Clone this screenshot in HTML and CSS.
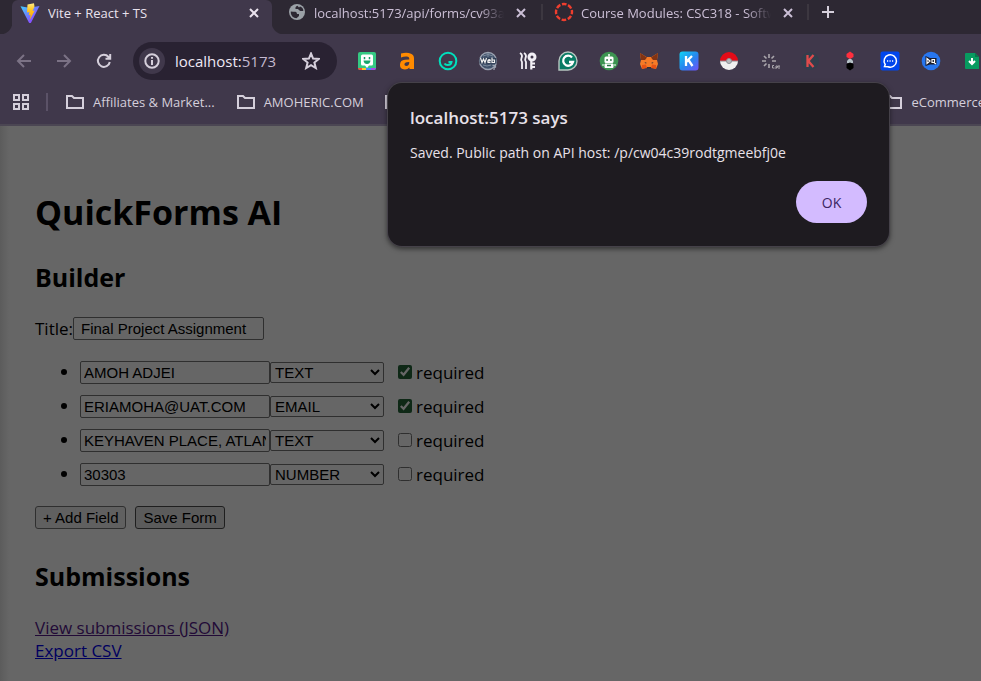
FILE: index.html
```html
<!DOCTYPE html>
<html lang="en">
<head>
<meta charset="utf-8">
<title>Vite + React + TS</title>
<link rel="stylesheet" href="styles.css">
</head>
<body>
<header class="browser">
  <div class="tabs">
    <div class="tab tab-active">
      <svg class="favicon" viewBox="0 0 20 20" aria-hidden="true"><defs><linearGradient id="vite" x1="0" y1="0" x2="1" y2="1"><stop offset="0" stop-color="#41d1ff"/><stop offset="1" stop-color="#a020ff"/></linearGradient><linearGradient id="bolt" x1="0" y1="0" x2="0" y2="1"><stop offset="0" stop-color="#ffea83"/><stop offset=".4" stop-color="#ffc420"/><stop offset="1" stop-color="#ffa000"/></linearGradient></defs><path d="M.5 3.200L9 4.700L19.500 3L11 19.800Q10 21 9 19.800Z" fill="url(#vite)"/><path d="M14 .3L7.500 1.500L7 9.500L9.400 8.900L8.700 12.300L10.600 11.700L9.700 17L14.800 7.600L12.600 8L14.500 3.500Z" fill="url(#bolt)"/></svg>
      <span class="tab-title">Vite + React + TS</span>
      <button class="close" aria-label="Close tab"><svg viewBox="0 0 10 10"><path d="M1 1L9 9M9 1L1 9"/></svg></button>
    </div>
    <div class="tab tab-api">
      <svg class="favicon" viewBox="0 0 20 20" aria-hidden="true"><circle cx="10" cy="10" r="8" fill="#9ba1a7"/><path d="M3.800 9.500Q6 9.800 8.500 9.800Q10 10 10 12H12V14L9.500 16.300Q4.500 16 3.800 11ZM10.500 3.800Q8 4.500 8.500 7H11Q12 8.500 13.500 9H16.300Q16.500 5.500 13 4.500L12 5.500Z" fill="#2d2833"/></svg>
      <span class="tab-title">localhost:5173/api/forms/cv93a</span>
      <button class="close" aria-label="Close tab"><svg viewBox="0 0 10 10"><path d="M1 1L9 9M9 1L1 9"/></svg></button>
    </div>
    <div class="tab tab-course">
      <svg class="favicon" viewBox="0 0 20 20" aria-hidden="true"><circle cx="10" cy="10" r="8" fill="none" stroke="#ef3e2e" stroke-width="2.400" stroke-dasharray="4.600 1.683" stroke-dashoffset="2.300"/></svg>
      <span class="tab-title">Course Modules: CSC318 - Softw</span>
      <button class="close" aria-label="Close tab"><svg viewBox="0 0 10 10"><path d="M1 1L9 9M9 1L1 9"/></svg></button>
    </div>
    <button class="new-tab" aria-label="New tab"><svg viewBox="0 0 12 12"><path d="M6 0V12M0 6H12"/></svg></button>
  </div>
  <div class="toolbar">
    <nav class="history">
      <button class="dim" aria-label="Back"><svg viewBox="0 0 16 16"><path d="M15 8H2M8 2L2 8L8 14"/></svg></button>
      <button class="dim" aria-label="Forward"><svg viewBox="0 0 16 16"><path d="M1 8H14M8 2L14 8L8 14"/></svg></button>
      <button aria-label="Reload"><svg viewBox="0 0 16 16"><path d="M13.800 9A6 6 0 1 1 12.500 4L14 5.500M14.200 1V5.800H9.500"/></svg></button>
    </nav>
    <div class="address">
      <button class="site-info" aria-label="Site information"><svg viewBox="0 0 16 16"><circle cx="8" cy="8" r="6.700"/><path d="M8 7V12M8 4V5.700"/></svg></button>
      <span class="url">localhost:<span class="port">5173</span></span>
      <button class="star" aria-label="Bookmark"><svg viewBox="0 0 18 18"><path d="M9 1.500L11.100 6.600L16.700 7L12.400 10.600L13.800 16L9 13.100L4.200 16L5.600 10.600L1.300 7L6.900 6.600Z"/></svg></button>
    </div>
    <div class="extensions">
      <svg viewBox="0 0 20 20"><defs><clipPath id="rb"><rect x="1" y="1" width="18" height="18" rx="2"/></clipPath></defs><g clip-path="url(#rb)"><path fill="#35c983" d="M0 0H20V20H0Z"/><path fill="#fb4b3d" d="M0 17H5V20H0Z"/><path fill="#ffc928" d="M5 17H9V20H5Z"/><path fill="#438bff" d="M9 17H14V20H9Z"/><path fill="#a849e6" d="M14 17H20V20H14Z"/></g><path d="M5.500 3.500H14.500Q16 3.500 16 5V13Q16 14.500 14.500 14.500H12L10 17L8 14.500H5.500Q4 14.500 4 13V5Q4 3.500 5.500 3.500Z" fill="#fff"/><path d="M7.500 6V8.300M12.500 6V8.300" stroke="#169b67" stroke-width="1.500"/><path d="M6.500 9.500H13.500Q13 13 10 13Q7 13 6.500 9.500Z" fill="#16a66b"/></svg>
      <svg viewBox="0 0 20 20"><path d="M4 5V2.500Q10 .7 14 2.800Q17 4 17 7.500V18H12.500V16.500Q10 19 6.500 18.300Q2.700 17.500 3 13.500Q3.300 9 8 8.700L12.300 8.500Q12.500 5.700 9.800 5.500Q7 5.300 4 6.500ZM12.300 11L9.500 11.200Q7.500 11.500 7.400 13.300Q7.400 15 9.200 15Q12.300 15 12.300 11Z" fill="#ff8b00" fill-rule="evenodd"/></svg>
      <svg viewBox="0 0 20 20" fill="none" stroke="#00e0bd" stroke-width="2"><circle cx="10" cy="10" r="8.300"/><path d="M10.500 11H13.500Q13 14 9.500 14Q7.500 14 6.500 12.500"/></svg>
      <svg viewBox="0 0 20 20"><circle cx="10" cy="10" r="8.500" fill="#40516a" stroke="#9ba2b1" stroke-width="1.300"/><path d="M5 5Q10 2 15 5M5 14Q9 16 13 14M10 2V6" fill="none" stroke="#7d8b9d"/><path d="M1.500 7H18.500V12.500H1.500Z" fill="#2f3d53"/><path d="M2.500 7L4 11.500L5.500 8L7 11.500L8.500 7M12.500 11.500H10Q9.500 9 11 8.700Q13 9 12 10H10M14 6.500V11.500H16.500V9H14" fill="none" stroke="#f2f2f2" stroke-width="1.200"/><path d="M14.500 14.500Q18 14 17.500 16Q16 16 16 18V19" fill="none" stroke="#9ba2b1" stroke-width="1.300"/></svg>
      <svg viewBox="0 0 20 20" fill="none" stroke="#f2eff5" stroke-width="1.800"><path d="M2 2Q5 4 3.500 7Q2.500 9 4 11V18M6 2Q9 4 7.500 7Q6.500 9 8 11V18"/><circle cx="14" cy="6" r="3" stroke-width="3"/><path d="M13.300 9V18.500M14 12.500H17M14 16H17" stroke-width="2.200"/></svg>
      <svg viewBox="0 0 20 20"><path d="M1 19V10A9 9 0 1 1 10 19Z" fill="#087b64" stroke="#b7c6c1" stroke-width="1.400"/><path d="M14 6.500A5 5 0 1 0 15 11H11" fill="none" stroke="#fff" stroke-width="2.300"/></svg>
      <svg viewBox="0 0 20 20"><circle cx="10" cy="10" r="9.300" fill="#3d9451"/><path d="M10 3V5.500" stroke="#fff" stroke-width="1.500"/><rect x="5.500" y="5.500" width="9" height="6.500" rx="1.500" fill="#fff"/><path d="M6 13H14V16.500H6ZM4 13V15M16 13V15" fill="#fff" stroke="#fff"/><path d="M7.200 9H9M11 9H12.800M8 14.500H12" stroke="#287343" stroke-width="1.700"/></svg>
      <svg viewBox="0 0 20 20"><path d="M1 2L7.500 6H12.500L19 2L18 9L19 13L17 18L12.500 16.500H7.500L3 18L1 13L2 9Z" fill="#f57b27"/><path d="M1 2L8 6.500L6 9L2 9ZM19 2L12 6.500L14 9L18 9Z" fill="#813313"/><path d="M5.500 11L8 12L6.500 12.500ZM14.500 11L12 12L13.500 12.500ZM8 16H12V17.500H8Z" fill="#30303a"/><path d="M3 14L7 13.500L8 17L3 18ZM17 14L13 13.500L12 17L17 18Z" fill="#e65315"/></svg>
      <svg viewBox="0 0 20 20"><defs><linearGradient id="kk" x1=".1" y1="0" x2="1" y2="1"><stop stop-color="#12cdf5"/><stop offset=".5" stop-color="#2687ee"/><stop offset="1" stop-color="#7150fa"/></linearGradient></defs><rect x=".5" y=".5" width="19" height="19" rx="3" fill="url(#kk)"/><path d="M7 5V15M13 5L7 11L9.500 9L13.500 15" stroke="#fff" stroke-width="2.300" fill="none"/></svg>
      <svg viewBox="0 0 20 20"><path d="M1 10A9 9 0 0 1 19 10Z" fill="#e30b18"/><path d="M1 10A9 9 0 0 0 19 10Z" fill="#f0f0f0"/><path d="M1 10H19" stroke="#8a868c" stroke-width="1"/><circle cx="10" cy="10" r="2.500" fill="#b8bcc0" stroke="#8a9095"/></svg>
      <svg viewBox="0 0 20 20" fill="none" stroke="#aaa6ac" stroke-width="1.600"><path d="M9 3V7M4 5L6.500 7.500M14 5L11.500 7.500M2 10H6M4 15L6.500 12.500M9 13V17M12 10H16"/><path d="M14 14.500H12.500V17H14.500M16 18V15H17.500V16.500H16M18 15H20M19 15V18" stroke-width="1"/></svg>
      <svg viewBox="0 0 20 20"><circle cx="10" cy="10" r="9" fill="#323e4c"/><path d="M7.500 4V16M13.500 4L8.300 10L13.500 16" fill="none" stroke="#df4b4c" stroke-width="2.300"/></svg>
      <svg viewBox="0 0 20 20"><path d="M7 12V10Q10 5 13 10V12Z" fill="#b5c1c7"/><path d="M10 .5L13.500 3V6L10 8L6.500 6V3Z" fill="#ff2e3d"/><path d="M10 11.500L13.500 13V17L10 19.500L6.500 17V13Z" fill="#000"/></svg>
      <svg viewBox="0 0 20 20"><rect x=".5" y=".5" width="19" height="19" rx="2" fill="#0046ed"/><path d="M4.500 15.500L5.200 13.500A6.200 6.200 0 1 1 8 15.700Z" fill="none" stroke="#fff" stroke-width="1.500"/><path d="M7 10H8.200M9.500 10H10.700M12 10H13.200" stroke="#fff" stroke-width="1.500"/></svg>
      <svg viewBox="0 0 20 20"><circle cx="10" cy="10" r="9.300" fill="#2776ef"/><path d="M4.500 5L9 7H15.500V13.500H9L4.500 15Z" fill="#1b1b28"/><path d="M6 7.500V12.500L9 10ZM11 8.500H13.500V11.500H11ZM13 11.500L15 13" fill="none" stroke="#fff" stroke-width="1.200"/></svg>
      <svg viewBox="0 0 20 20"><path d="M5 2H14L18 6V18H5Q4 18 4 17V3Q4 2 5 2Z" fill="#079b60"/><path d="M14 2V6H18Z" fill="#09754b"/><path d="M11 7V13M8 10L11 13L14 10" fill="none" stroke="#fff" stroke-width="2"/></svg>
    </div>
  </div>
  <nav class="bookmarks">
    <button class="apps" aria-label="Apps"><svg viewBox="0 0 18 18"><path d="M2 2H7V7H2ZM11 2H16V7H11ZM2 11H7V16H2ZM11 11H16V16H11Z"/></svg></button>
    <span class="divider"></span>
    <a class="bookmark" href="#"><svg viewBox="0 0 20 16"><path d="M2 2H7L9 4H18V14H2Z"/></svg>Affiliates &amp; Market...</a>
    <a class="bookmark" href="#"><svg viewBox="0 0 20 16"><path d="M2 2H7L9 4H18V14H2Z"/></svg>AMOHERIC.COM</a>
    <a class="bookmark" href="#" aria-label="Bookmark"><svg viewBox="0 0 20 16"><path d="M1 2H15V14H1Z"/></svg></a>
    <a class="bookmark bookmark-last" href="#"><svg viewBox="0 0 20 16"><path d="M2 2H7L9 4H18V14H2Z"/></svg>eCommerce</a>
  </nav>
</header>
<main class="page">
  <h1>QuickForms AI</h1>
  <h2>Builder</h2>
  <div class="title-row"><label for="form-title">Title:</label><input class="field title-field" id="form-title" type="text" value="Final Project Assignment"></div>
  <ul class="fields">
    <li><div class="row"><input class="field" type="text" aria-label="Field label" value="AMOH ADJEI"><select aria-label="Field type"><option>TEXT</option></select><label class="required"><input type="checkbox" checked>required</label></div></li>
    <li><div class="row"><input class="field" type="text" aria-label="Field label" value="ERIAMOHA@UAT.COM"><select aria-label="Field type"><option>EMAIL</option></select><label class="required"><input type="checkbox" checked>required</label></div></li>
    <li><div class="row"><input class="field" type="text" aria-label="Field label" value="KEYHAVEN PLACE, ATLANTA"><select aria-label="Field type"><option>TEXT</option></select><label class="required"><input type="checkbox">required</label></div></li>
    <li><div class="row"><input class="field" type="text" aria-label="Field label" value="30303"><select aria-label="Field type"><option>NUMBER</option></select><label class="required"><input type="checkbox">required</label></div></li>
  </ul>
  <div class="actions"><button>+ Add Field</button><button class="save">Save Form</button></div>
  <h2>Submissions</h2>
  <div class="links"><a class="visited" href="#">View submissions (JSON)</a><a href="#">Export CSV</a></div>
</main>
<section class="dialog" role="alertdialog" aria-labelledby="dialog-title">
  <h3 id="dialog-title">localhost:5173 says</h3>
  <p>Saved. Public path on API host: /p/cw04c39rodtgmeebfj0e</p>
  <button>OK</button>
</section>
</body>
</html>
```
FILE: styles.css
```css
* { box-sizing: border-box; }

body {
  margin: 0;
  min-height: 100vh;
  display: flex;
  flex-direction: column;
  overflow: hidden;
  position: relative;
  font-family: "Open Sans", "Noto Sans", sans-serif;
}

.browser {
  background: #40384b;
  color: #d5cfdb;
  border-bottom: 2px solid #4b4653;
  font-size: 13px;
}

.browser button {
  border: 0;
  padding: 0;
  background: none;
  color: inherit;
  display: grid;
  place-items: center;
}

.browser button svg,
.bookmark svg {
  fill: none;
  stroke: currentColor;
  stroke-width: 2;
}

.tabs {
  height: 34px;
  padding-left: 12px;
  display: flex;
  background: #2d2833;
}

.tab {
  position: relative;
  display: flex;
  align-items: center;
  height: 26px;
  padding-right: 13px;
}

.tab-active {
  height: 34px;
  padding: 0 13px 8px 8px;
  width: 260px;
  background: #40384b;
  border-radius: 6px 6px 0 0;
  color: #e9e2ed;
}

.tab-active::before,
.tab-active::after {
  content: "";
  position: absolute;
  bottom: 0;
  width: 12px;
  height: 12px;
}

.tab-active::before {
  right: 100%;
  background: radial-gradient(circle at 0 0, #2d2833 12px, #40384b 13px);
}

.tab-active::after {
  left: 100%;
  background: radial-gradient(circle at 100% 0, #2d2833 12px, #40384b 13px);
}

.tab-api {
  width: 271px;
  padding-left: 15px;
  padding-right: 17px;
}

.tab-course {
  width: 266px;
  padding-left: 11px;
  padding-right: 16px;
}

.tab-api,
.tab-course { color: #cbbfd6; }

.tab-api::after,
.tab-course::after {
  content: "";
  position: absolute;
  right: 0;
  top: 4px;
  width: 2px;
  height: 16px;
  background: #3c3740;
}

.favicon {
  width: 20px;
  height: 20px;
  flex: none;
}

.tab-api .favicon,
.tab-course .favicon { margin-top: -2px; }

.tab-title {
  flex: 1;
  min-width: 0;
  margin: 0 6px 0 8px;
  overflow: hidden;
  white-space: nowrap;
  line-height: 20px;
}

.tab-api .tab-title,
.tab-course .tab-title {
  margin-left: 7px;
  -webkit-mask-image: linear-gradient(90deg, #000 84%, transparent 97%);
  mask-image: linear-gradient(90deg, #000 84%, transparent 97%);
}

.close svg { width: 10px; height: 10px; }
.browser .new-tab { width: 38px; height: 24px; }
.new-tab svg { width: 12px; height: 12px; }

.toolbar {
  height: 54px;
  display: flex;
  align-items: center;
  padding-left: 16px;
}

.history { display: flex; gap: 24px; }
.history svg { width: 16px; height: 16px; }
.browser .history .dim { color: #7b7285; }

.address {
  display: flex;
  align-items: center;
  width: 204px;
  height: 38px;
  margin: 0 20px 0 21px;
  padding: 0 17px 0 6px;
  border-radius: 19px;
  background: #292232;
}

.browser .site-info {
  width: 26px;
  height: 26px;
  border-radius: 50%;
  background: #40384b;
}

.site-info svg { width: 16px; height: 16px; }
.url { flex: 1; margin-left: 10px; font-size: 15px; color: #efe8f4; }
.port { color: #c4b9cf; }
.star svg { width: 18px; height: 18px; }

.extensions {
  flex: 1;
  display: flex;
  justify-content: space-between;
}

.extensions svg { width: 20px; height: 20px; flex: none; }

.bookmarks {
  height: 36px;
  display: flex;
  align-items: center;
  padding: 0 0 8px 12px;
}

.apps svg { width: 18px; height: 18px; }

.divider {
  width: 2px;
  height: 18px;
  margin: 0 17px 0 16px;
  background: #5b5267;
}

.bookmark {
  display: flex;
  align-items: center;
  gap: 8px;
  margin-right: 21px;
  color: inherit;
  line-height: 16px;
  text-decoration: none;
  white-space: nowrap;
}

.bookmark svg { width: 20px; height: 16px; }
.bookmark-last { margin: 0 -4px 0 auto; }

.page {
  position: relative;
  flex: 1;
  padding: 62px 35px 18px;
  background: #fff;
  color: #000;
  font-size: 17px;
  line-height: 23px;
}

.page::after {
  content: "";
  position: absolute;
  inset: 0;
  background: linear-gradient(90deg, rgba(0, 0, 0, .1), transparent 9px), rgba(0, 0, 0, .6);
  pointer-events: none;
}

h1 { margin: 0 0 23px; font-size: 34px; line-height: 48px; }
h2 { margin: 0 0 22px; font-size: 25px; line-height: 36px; }

.title-row { display: flex; align-items: center; }

.field,
.page select,
.actions button {
  font-family: "Liberation Sans", Arial, sans-serif;
  font-size: 15px;
  color: #000;
  border: 1px solid #767676;
  border-radius: 2px;
}

.field {
  width: 190px;
  height: 23px;
  padding: 1px 3px;
  background: #fff;
}

.title-field { width: 191px; padding-left: 7px; }

.fields {
  display: flex;
  flex-direction: column;
  gap: 10px;
  margin: 20px 0;
  padding-left: 45px;
}

.row { display: flex; align-items: center; }

.page select {
  width: 114px;
  height: 21px;
  padding: 0;
  background: #fff;
}

.required { display: flex; align-items: center; margin-left: 14px; }

.required input {
  width: 14px;
  height: 14px;
  margin: 0 4px 2px 0;
  accent-color: #236439;
}

.actions { display: flex; gap: 9px; margin-bottom: 29px; }

.actions button {
  height: 23px;
  padding: 0 7px;
  background: #efefef;
  border-radius: 3px;
}

.actions .save { background: #e3e3e3; border-color: #4f4f4f; }

.links { display: flex; flex-direction: column; align-items: flex-start; }
.links a { color: #00e; }
.links .visited { color: #551a8b; }

.dialog {
  position: absolute;
  top: 83px;
  right: 92px;
  width: 501px;
  padding: 23px 22px;
  display: flex;
  flex-direction: column;
  border-radius: 14px;
  background: #1e1b20;
  color: #e8e1e9;
  box-shadow: 0 0 0 1px #454149, 0 2px 5px 1px rgba(0, 0, 0, .5);
}

.dialog h3 { margin: 0 0 11px; font-size: 17px; line-height: 24px; font-weight: 600; }
.dialog p { margin: 0 0 17px; font-size: 14px; line-height: 23px; }

.dialog button {
  align-self: flex-end;
  width: 71px;
  height: 42px;
  border: 0;
  border-radius: 21px;
  background: #d3bbff;
  color: #3b2663;
  font: 500 14px "Open Sans", sans-serif;
}
```
